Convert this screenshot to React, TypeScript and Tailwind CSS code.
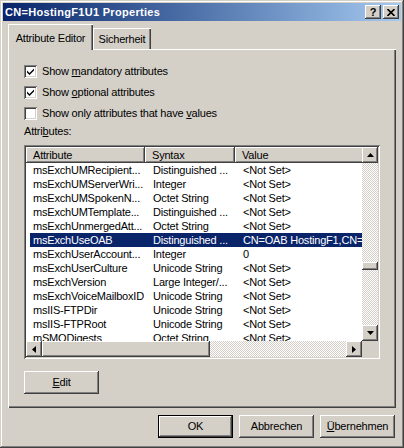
import type { ReactNode } from 'react';

// classic 3D edges
const raised = 'shadow-[inset_-1px_-1px_#404040,inset_1px_1px_#ffffff,inset_-2px_-2px_#808080,inset_2px_2px_#d4d0c8]';
const sunken = 'shadow-[inset_1px_1px_#808080,inset_-1px_-1px_#ffffff,inset_2px_2px_#404040,inset_-2px_-2px_#d4d0c8]';
const hatch = 'bg-[image:repeating-conic-gradient(#d4d0c8_0%_25%,#ffffff_0%_50%)] bg-size-[2px_2px]';

const rows = [
  ['msExchUMRecipient...', 'Distinguished ...', '<Not Set>'],
  ['msExchUMServerWri...', 'Integer', '<Not Set>'],
  ['msExchUMSpokenN...', 'Octet String', '<Not Set>'],
  ['msExchUMTemplate...', 'Distinguished ...', '<Not Set>'],
  ['msExchUnmergedAtt...', 'Octet String', '<Not Set>'],
  ['msExchUseOAB', 'Distinguished ...', 'CN=OAB HostingF1,CN=OAB,CN=AddressListsContainer'],
  ['msExchUserAccount...', 'Integer', '0'],
  ['msExchUserCulture', 'Unicode String', '<Not Set>'],
  ['msExchVersion', 'Large Integer/...', '<Not Set>'],
  ['msExchVoiceMailboxID', 'Unicode String', '<Not Set>'],
  ['msIIS-FTPDir', 'Unicode String', '<Not Set>'],
  ['msIIS-FTPRoot', 'Unicode String', '<Not Set>'],
  ['mSMQDigests', 'Octet String', '<Not Set>'],
];

function Arrow({ dir }: { dir: 'up' | 'down' | 'left' | 'right' }) {
  const pts = {
    up: '0,4 7,4 3.5,0',
    down: '0,0 7,0 3.5,4',
    left: '4,0 4,7 0,3.5',
    right: '0,0 0,7 4,3.5',
  }[dir];
  const vertical = dir === 'up' || dir === 'down';
  return (
    <svg width={vertical ? 7 : 4} height={vertical ? 4 : 7} viewBox={vertical ? '0 0 7 4' : '0 0 4 7'}>
      <polygon points={pts} fill="#000" />
    </svg>
  );
}

function ScrollButton({ dir }: { dir: 'up' | 'down' | 'left' | 'right' }) {
  return (
    <div className={`flex h-[16px] w-[16px] shrink-0 items-center justify-center bg-[#d4d0c8] ${raised}`}>
      <Arrow dir={dir} />
    </div>
  );
}

function CheckBox({ checked, children }: { checked: boolean; children: ReactNode }) {
  return (
    <div className="flex h-[13px] items-center gap-[5px]">
      <span className={`flex h-[13px] w-[13px] items-center justify-center bg-white ${sunken}`}>
        {checked && (
          <svg width="7" height="7" viewBox="0 0 7 7">
            <path d="M0 2.5 L2.5 5 L7 0.5 L7 2.5 L2.5 7 L0 4.5 Z" fill="#000" />
          </svg>
        )}
      </span>
      <span className="leading-[13px]">{children}</span>
    </div>
  );
}

function Button({ children, isDefault = false }: { children: ReactNode; isDefault?: boolean }) {
  return (
    <div
      className={`flex h-[23px] w-[75px] items-center justify-center bg-[#d4d0c8] ${
        isDefault ? 'border border-black' : ''
      }`}
    >
      <div className={`flex h-full w-full items-center justify-center ${raised}`}>{children}</div>
    </div>
  );
}

export default function App() {
  return (
    <div
      className={`flex h-[448px] w-[404px] flex-col bg-[#d4d0c8] p-[3px] font-['Liberation_Sans',Arial,sans-serif] text-[11px] tracking-[-0.2px] text-black shadow-[inset_-1px_-1px_#404040,inset_1px_1px_#d4d0c8,inset_-2px_-2px_#808080,inset_2px_2px_#ffffff]`}
    >
      {/* Title bar */}
      <div className="flex h-[18px] shrink-0 items-center justify-between bg-linear-to-r from-[#0a246a] to-[#a6caf0] pl-[2px] pr-[2px]">
        <span className="text-[11px] font-bold tracking-[0.3px] text-white">CN=HostingF1U1 Properties</span>
        <div className="flex gap-[2px]">
          <div className={`flex h-[14px] w-[16px] items-center justify-center bg-[#d4d0c8] ${raised}`}>
            <span className="text-[11px] leading-none font-bold">?</span>
          </div>
          <div className={`flex h-[14px] w-[16px] items-center justify-center bg-[#d4d0c8] ${raised}`}>
            <svg width="8" height="7" viewBox="0 0 8 7">
              <path d="M0.5 0 L7.5 7 M7.5 0 L0.5 7" stroke="#000" strokeWidth="1.6" />
            </svg>
          </div>
        </div>
      </div>

      {/* Tabs */}
      <div className="ml-[5px] flex h-[28px] shrink-0 items-end">
        <div className="relative z-10 mb-[-1px] flex h-[26px] w-[85px] justify-center bg-[#d4d0c8] pt-[8px] shadow-[inset_1px_1px_#ffffff,inset_-1px_0_#404040,inset_-2px_0_#808080]">
          <span className="leading-[13px]">Attribute Editor</span>
        </div>
        <div className="flex h-[21px] w-[58px] justify-center bg-[#d4d0c8] pt-[5px] shadow-[inset_1px_1px_#ffffff,inset_-1px_0_#404040,inset_-2px_0_#808080]">
          <span className="leading-[13px]">Sicherheit</span>
        </div>
      </div>

      {/* Tab panel */}
      <div className="mx-[5px] flex h-[359px] shrink-0 flex-col px-[16px] pt-[16px] shadow-[inset_1px_1px_#ffffff,inset_-1px_-1px_#404040,inset_-2px_-2px_#808080]">
        <div className="flex flex-col gap-[8px]">
          <CheckBox checked>
            Show <span className="underline underline-offset-1">m</span>andatory attributes
          </CheckBox>
          <CheckBox checked>
            Show <span className="underline underline-offset-1">o</span>ptional attributes
          </CheckBox>
          <CheckBox checked={false}>
            Show only attributes that have <span className="underline underline-offset-1">v</span>alues
          </CheckBox>
        </div>

        <div className="mt-[5px] leading-[13px]">
          Attri<span className="underline underline-offset-1">b</span>utes:
        </div>

        {/* List view */}
        <div className={`mt-[7px] h-[214px] shrink-0 bg-white p-[2px] ${sunken}`}>
          <div className="flex h-full flex-col">
            <div className="flex min-h-0 flex-1">
              <div className="min-w-0 flex-1 overflow-hidden">
                <div className="flex h-[16px] w-[500px] bg-[#d4d0c8]">
                  <div className={`flex w-[119px] shrink-0 items-center pl-[7px] ${raised}`}>Attribute</div>
                  <div className={`flex w-[90px] shrink-0 items-center pl-[7px] ${raised}`}>Syntax</div>
                  <div className={`flex w-[220px] shrink-0 items-center pl-[7px] ${raised}`}>Value</div>
                </div>
                {rows.map(([attr, syntax, value], i) => {
                  const selected = i === 5;
                  return (
                    <div key={attr} className="flex h-[14px] w-[500px] pl-[4px] leading-[14px] whitespace-nowrap">
                      <div className={`flex flex-1 ${selected ? 'bg-[#0a246a] text-white' : ''}`}>
                        <div className="w-[115px] shrink-0 overflow-hidden pl-[3px]">{attr}</div>
                        <div className="w-[90px] shrink-0 overflow-hidden pl-[8px]">{syntax}</div>
                        <div className="flex-1 overflow-hidden pl-[8px]">{value}</div>
                      </div>
                    </div>
                  );
                })}
              </div>
              <div className="flex w-[16px] shrink-0 flex-col">
                <ScrollButton dir="up" />
                <div className={`h-[99px] shrink-0 ${hatch}`} />
                <div className={`h-[8px] shrink-0 bg-[#d4d0c8] ${raised}`} />
                <div className={`flex-1 ${hatch}`} />
                <ScrollButton dir="down" />
              </div>
            </div>
            <div className="flex h-[16px] shrink-0">
              <ScrollButton dir="left" />
              <div className={`w-[168px] shrink-0 bg-[#d4d0c8] ${raised}`} />
              <div className={`flex-1 ${hatch}`} />
              <ScrollButton dir="right" />
              <div className="w-[16px] shrink-0 bg-[#d4d0c8]" />
            </div>
          </div>
        </div>

        <div className="mt-[12px]">
          <Button>
            <span>
              <span className="underline underline-offset-1">E</span>dit
            </span>
          </Button>
        </div>
      </div>

      {/* Dialog buttons */}
      <div className="mt-[7px] flex justify-end gap-[6px] pr-[6px]">
        <Button isDefault>OK</Button>
        <Button>Abbrechen</Button>
        <Button>
          <span>
            <span className="underline underline-offset-1">Ü</span>bernehmen
          </span>
        </Button>
      </div>
    </div>
  );
}
